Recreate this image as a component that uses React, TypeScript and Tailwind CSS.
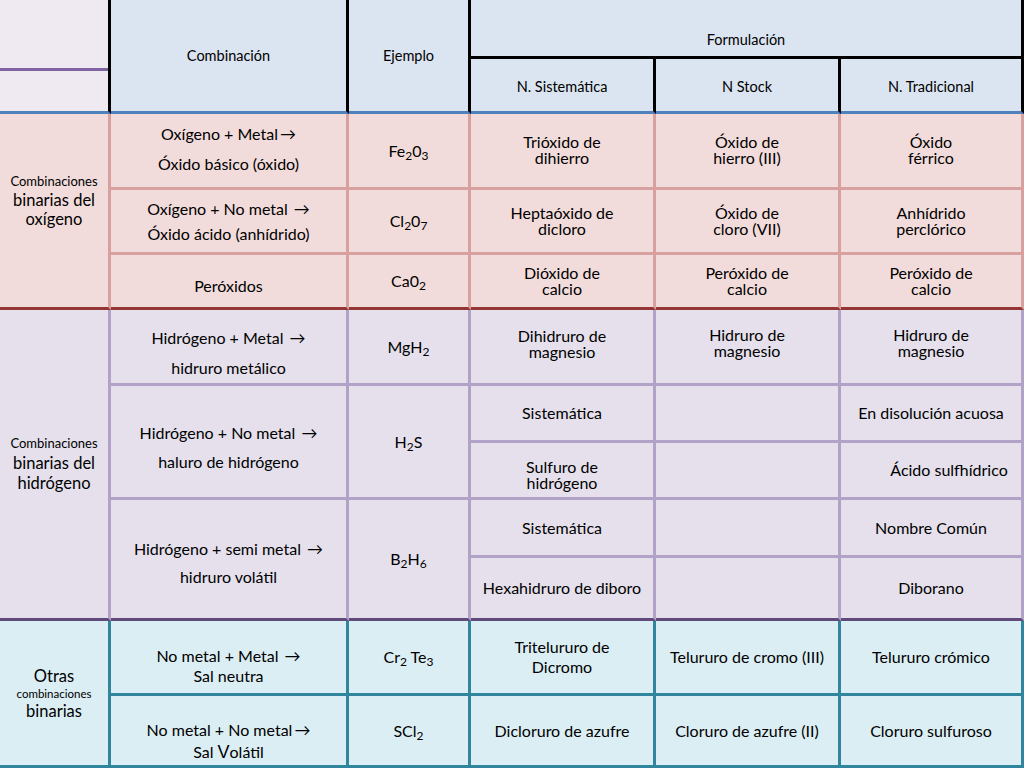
import type { ReactNode } from 'react'

type Tone = 'head' | 'pink' | 'purple' | 'teal'

const BG: Record<Tone, string> = {
  head: 'bg-[#dbe5f1]',
  pink: 'bg-[#f2dcdb]',
  purple: 'bg-[#e5e0ec]',
  teal: 'bg-[#dbeef4]',
}

const LINE: Record<Tone, string> = {
  head: 'border-black',
  pink: 'border-[#d9a0a0]',
  purple: 'border-[#b3a2c7]',
  teal: 'border-[#31859c]',
}

function Cell({
  tone,
  className = '',
  children,
}: {
  tone: Tone
  className?: string
  children?: ReactNode
}) {
  return (
    <div
      className={`flex flex-col items-center justify-center border-r-[3px] border-b-[3px] text-center ${BG[tone]} ${LINE[tone]} ${className}`}>
      {children}
    </div>
  )
}

function Two({ a, b }: { a: ReactNode; b: ReactNode }) {
  return (
    <div className="text-[16px] leading-[16px]">
      <div>{a}</div>
      <div>{b}</div>
    </div>
  )
}

const Arrow = () => <span className="ml-0.5">→</span>

export default function App() {
  return (
    <div className="h-[768px] w-[1024px] overflow-hidden bg-white font-['Lato',sans-serif] text-[16px] text-black">
      <div className="grid grid-cols-[111px_238px_122px_185px_185px_183px] grid-rows-[59px_55px_76px_65px_55px_76px_57px_57px_58px_63px_75px_72px]">
        {/* ---- header ---- */}
        <div className="row-span-2 flex flex-col border-r-[3px] border-b-[3px] border-r-black border-b-[#4f81bd] bg-[#efeaf1] pt-[68px]">
          <div className="h-[3px] bg-[#8064a2]" />
        </div>
        <Cell tone="head" className="row-span-2 border-b-[#4f81bd] text-[14.5px]">
          Combinación
        </Cell>
        <Cell tone="head" className="row-span-2 border-b-[#4f81bd] text-[14.5px]">
          Ejemplo
        </Cell>
        <Cell tone="head" className="col-span-3 justify-end border-r-0 pb-[5px] text-[14.5px]">
          Formulación
        </Cell>
        <Cell tone="head" className="border-b-[#4f81bd] pt-[3px] text-[14.5px]">
          N. Sistemática
        </Cell>
        <Cell tone="head" className="border-b-[#4f81bd] pt-[3px] text-[14.5px]">
          N Stock
        </Cell>
        <Cell tone="head" className="border-r-0 border-b-[#4f81bd] pt-[3px] text-[14.5px]">
          N. Tradicional
        </Cell>

        {/* ---- oxígeno ---- */}
        <Cell tone="pink" className="row-span-3 border-b-[#943634] bg-[#e6b9b8] pb-[20px] text-[16.5px] leading-[19px]">
          <span className="text-[13px]">Combinaciones</span>
          <span>binarias del</span>
          <span>oxígeno</span>
        </Cell>
        <Cell tone="pink" className="gap-[6px] pb-[4px]">
          <span>
            Oxígeno + Metal
            <Arrow />
          </span>
          <span>Óxido básico (óxido)</span>
        </Cell>
        <Cell tone="pink">
          <span>
            Fe<sub>2</sub>0<sub>3</sub>
          </span>
        </Cell>
        <Cell tone="pink" className="pb-[2px]">
          <Two a="Trióxido de" b="dihierro" />
        </Cell>
        <Cell tone="pink" className="pb-[2px]">
          <Two a="Óxido de" b="hierro (III)" />
        </Cell>
        <Cell tone="pink" className="border-r-0 pb-[2px]">
          <Two a="Óxido" b="férrico" />
        </Cell>

        <Cell tone="pink" className="gap-[1px]">
          <span>
            Oxígeno + No metal <Arrow />
          </span>
          <span>Óxido ácido (anhídrido)</span>
        </Cell>
        <Cell tone="pink">
          <span>
            Cl<sub>2</sub>0<sub>7</sub>
          </span>
        </Cell>
        <Cell tone="pink">
          <Two a="Heptaóxido de" b="dicloro" />
        </Cell>
        <Cell tone="pink">
          <Two a="Óxido de" b="cloro (VII)" />
        </Cell>
        <Cell tone="pink" className="border-r-0">
          <Two a="Anhídrido" b="perclórico" />
        </Cell>

        <Cell tone="pink" className="border-b-[#943634] pt-[10px]">
          Peróxidos
        </Cell>
        <Cell tone="pink" className="border-b-[#943634]">
          <span>
            Ca0<sub>2</sub>
          </span>
        </Cell>
        <Cell tone="pink" className="border-b-[#943634]">
          <Two a="Dióxido de" b="calcio" />
        </Cell>
        <Cell tone="pink" className="border-b-[#943634]">
          <Two a="Peróxido de" b="calcio" />
        </Cell>
        <Cell tone="pink" className="border-r-0 border-b-[#943634]">
          <Two a="Peróxido de" b="calcio" />
        </Cell>

        {/* ---- hidrógeno ---- */}
        <Cell tone="purple" className="row-span-5 border-b-[#5f4a7b] bg-[#ccc1da] pb-[2px] text-[16.5px] leading-[20px]">
          <span className="text-[13px]">Combinaciones</span>
          <span>binarias del</span>
          <span>hidrógeno</span>
        </Cell>
        <Cell tone="purple" className="gap-[6px] pt-[12px]">
          <span>
            Hidrógeno + Metal <Arrow />
          </span>
          <span>hidruro metálico</span>
        </Cell>
        <Cell tone="purple">
          <span>
            MgH<sub>2</sub>
          </span>
        </Cell>
        <Cell tone="purple" className="pb-[6px]">
          <Two a="Dihidruro de" b="magnesio" />
        </Cell>
        <Cell tone="purple" className="pb-[8px]">
          <Two a="Hidruro de" b="magnesio" />
        </Cell>
        <Cell tone="purple" className="border-r-0 pb-[8px]">
          <Two a="Hidruro de" b="magnesio" />
        </Cell>

        <Cell tone="purple" className="row-span-2 gap-[5px] pt-[12px]">
          <span>
            Hidrógeno + No metal <Arrow />
          </span>
          <span>haluro de hidrógeno</span>
        </Cell>
        <Cell tone="purple" className="row-span-2">
          <span>
            H<sub>2</sub>S
          </span>
        </Cell>
        <Cell tone="purple" className="bg-[#ccc1da]">
          Sistemática
        </Cell>
        <Cell tone="purple" className="bg-[#ccc1da]" />
        <Cell tone="purple" className="border-r-0 bg-[#ccc1da]">
          En disolución acuosa
        </Cell>
        <Cell tone="purple" className="pt-[10px]">
          <Two a="Sulfuro de" b="hidrógeno" />
        </Cell>
        <Cell tone="purple" />
        <Cell tone="purple" className="border-r-0 pl-[36px]">
          Ácido sulfhídrico
        </Cell>

        <Cell tone="purple" className="row-span-2 gap-[4px] border-b-[#5f4a7b] pt-[8px]">
          <span>
            Hidrógeno + semi metal <Arrow />
          </span>
          <span>hidruro volátil</span>
        </Cell>
        <Cell tone="purple" className="row-span-2 border-b-[#5f4a7b]">
          <span>
            B<sub>2</sub>H<sub>6</sub>
          </span>
        </Cell>
        <Cell tone="purple" className="bg-[#ccc1da]">
          Sistemática
        </Cell>
        <Cell tone="purple" className="bg-[#ccc1da]" />
        <Cell tone="purple" className="border-r-0 bg-[#ccc1da]">
          Nombre Común
        </Cell>
        <Cell tone="purple" className="border-b-[#5f4a7b]">
          Hexahidruro de diboro
        </Cell>
        <Cell tone="purple" className="border-b-[#5f4a7b]" />
        <Cell tone="purple" className="border-r-0 border-b-[#5f4a7b]">
          Diborano
        </Cell>

        {/* ---- otras ---- */}
        <Cell tone="teal" className="row-span-2 border-b-0 bg-[#b7dde8] text-[16.5px] leading-[20px]">
          <span>Otras</span>
          <span className="text-[11.5px] leading-[15px]">combinaciones</span>
          <span>binarias</span>
        </Cell>
        <Cell tone="teal" className="pt-[18px] leading-[20px]">
          <span>
            No metal + Metal <Arrow />
          </span>
          <span>Sal neutra</span>
        </Cell>
        <Cell tone="teal">
          <span>
            Cr<sub>2</sub> Te<sub>3</sub>
          </span>
        </Cell>
        <Cell tone="teal" className="leading-[20px]">
          <span>Tritelururo de</span>
          <span>Dicromo</span>
        </Cell>
        <Cell tone="teal">Telururo de cromo (III)</Cell>
        <Cell tone="teal" className="border-r-0">
          Telururo crómico
        </Cell>

        <Cell tone="teal" className="border-b-0 pt-[20px] leading-[22px]">
          <span>
            No metal + No metal
            <Arrow />
          </span>
          <span>
            Sal <span className="font-['Liberation_Sans'] text-[18px]">V</span>olátil
          </span>
        </Cell>
        <Cell tone="teal" className="border-b-0">
          <span>
            SCl<sub>2</sub>
          </span>
        </Cell>
        <Cell tone="teal" className="border-b-0">
          Dicloruro de azufre
        </Cell>
        <Cell tone="teal" className="border-b-0">
          Cloruro de azufre (II)
        </Cell>
        <Cell tone="teal" className="border-r-0 border-b-0">
          Cloruro sulfuroso
        </Cell>
      </div>
    </div>
  )
}
